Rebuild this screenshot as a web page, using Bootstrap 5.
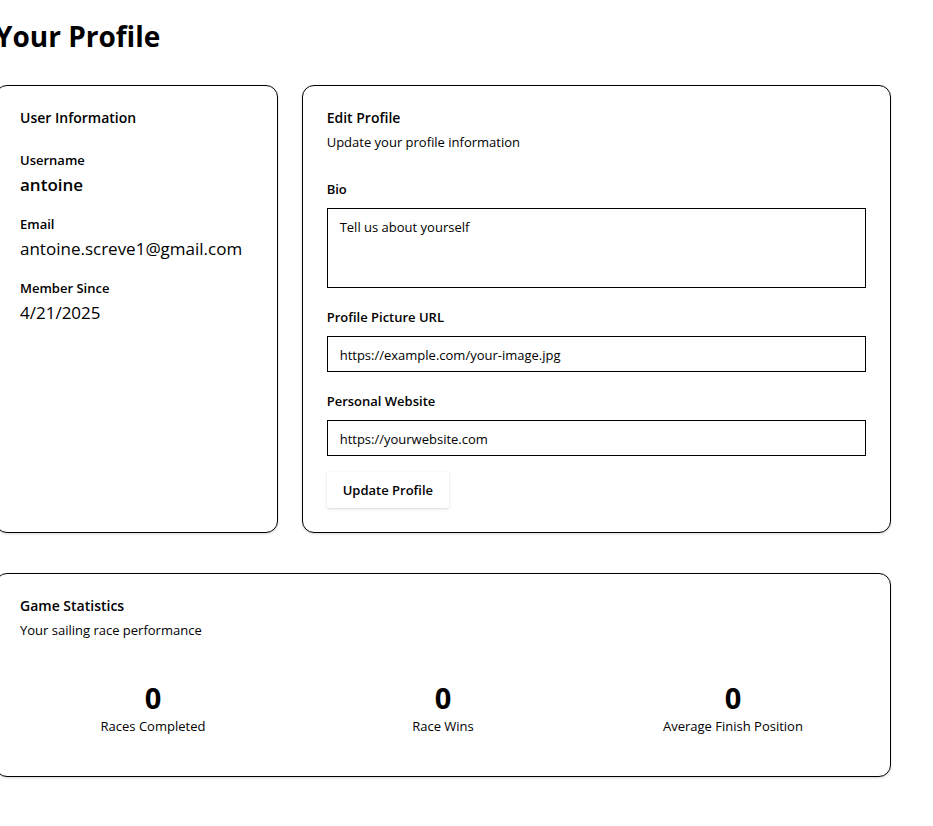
<!DOCTYPE html>
<html lang="en">
<head>
<meta charset="utf-8">
<meta name="viewport" content="width=device-width, initial-scale=1">
<title>Your Profile</title>
<link rel="stylesheet" href="https://cdn.jsdelivr.net/npm/bootstrap@5.3.0/dist/css/bootstrap.min.css">
<style>
body { font-family: "Open Sans", "Noto Sans", sans-serif; font-size: 13px; line-height: 20px; color: #000; background: #fff; overflow-x: hidden; }
.profile-page { margin: 0 42px 0 -5px; padding: 17px 0 48px; }
.page-title { font-size: 28px; line-height: 38px; font-weight: 700; margin-bottom: 30px; }
.panel { --bs-card-border-color: #000; --bs-card-border-radius: 12px; --bs-card-color: #000; padding: 24px; box-shadow: 0 1px 3px rgba(0,0,0,.1), 0 1px 2px rgba(0,0,0,.06); }
.panel-title { font-size: 14px; line-height: 16px; font-weight: 600; margin: 0; }
.panel-note { margin: 6px 0 0; }
.facts dt { font-weight: 600; }
.facts dd { font-size: 17px; line-height: 30px; margin-bottom: 14px; }
.form-label { font-weight: 600; line-height: 26px; margin-bottom: 6px; }
.form-control, .form-control:focus { border-color: #000; border-radius: 0; color: #000; background: #fff; font-size: 13px; line-height: 20px; padding: 8px 12px; }
input.form-control { height: 36px; padding-bottom: 6px; }
textarea.form-control { height: 80px; resize: none; }
.form-control::placeholder { color: #000; opacity: 1; }
.btn-update { --bs-btn-font-size: 13px; --bs-btn-font-weight: 600; --bs-btn-color: #000; --bs-btn-border-width: 0; --bs-btn-border-radius: 0; --bs-btn-bg: #fff; line-height: 20px; padding: 8px 16px; box-shadow: 0 1px 3px rgba(0,0,0,.1), 0 1px 2px rgba(0,0,0,.06); }
.panel-stats { margin-top: 40px; }
.stat-value { font-size: 29px; line-height: 36px; font-weight: 700; }
</style>
</head>
<body>
<main class="profile-page">
  <h1 class="page-title">Your Profile</h1>
  <div class="row g-4">
    <div class="col-md-4">
      <section class="card panel h-100">
        <h2 class="panel-title">User Information</h2>
        <dl class="facts mt-4 mb-0">
          <dt>Username</dt><dd class="fw-semibold">antoine</dd>
          <dt>Email</dt><dd>antoine.screve1@gmail.com</dd>
          <dt>Member Since</dt><dd>4/21/2025</dd>
        </dl>
      </section>
    </div>
    <div class="col-md-8">
      <section class="card panel h-100">
        <h2 class="panel-title">Edit Profile</h2>
        <p class="panel-note">Update your profile information</p>
        <form class="d-flex flex-column gap-3 mt-4">
          <div>
            <label class="form-label d-block" for="bio">Bio</label>
            <textarea class="form-control" id="bio" placeholder="Tell us about yourself"></textarea>
          </div>
          <div>
            <label class="form-label d-block" for="picture">Profile Picture URL</label>
            <input class="form-control" id="picture" type="url" placeholder="https://example.com/your-image.jpg">
          </div>
          <div>
            <label class="form-label d-block" for="website">Personal Website</label>
            <input class="form-control" id="website" type="url" placeholder="https://yourwebsite.com">
          </div>
          <button class="btn btn-update align-self-start" type="submit">Update Profile</button>
        </form>
      </section>
    </div>
  </div>
  <section class="card panel panel-stats">
    <h2 class="panel-title">Game Statistics</h2>
    <p class="panel-note">Your sailing race performance</p>
    <div class="row g-4 mt-0 text-center">
      <div class="col-md-4"><div class="py-3"><div class="stat-value">0</div><div>Races Completed</div></div></div>
      <div class="col-md-4"><div class="py-3"><div class="stat-value">0</div><div>Race Wins</div></div></div>
      <div class="col-md-4"><div class="py-3"><div class="stat-value">0</div><div>Average Finish Position</div></div></div>
    </div>
  </section>
</main>
<script src="https://cdn.jsdelivr.net/npm/bootstrap@5.3.0/dist/js/bootstrap.bundle.min.js"></script>
</body>
</html>
